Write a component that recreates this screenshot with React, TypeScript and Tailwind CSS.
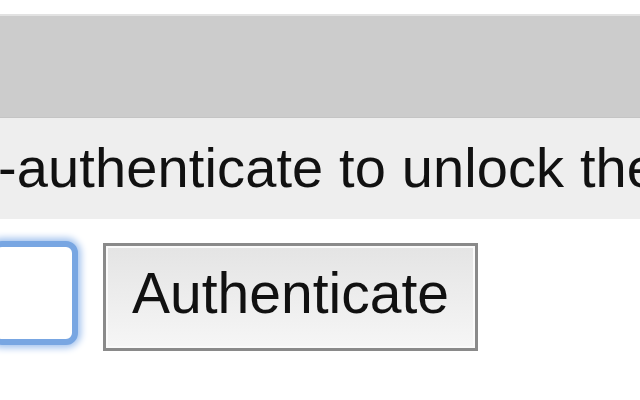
export default function App() {
  return (
    <div className="w-[640px] h-[400px] overflow-hidden bg-white font-['Liberation_Sans',Arial,sans-serif] text-[#111]">
      {/* page header strip */}
      <div className="h-[16px] bg-white border-b-2 border-[#e2e2e2]" />
      <div className="h-[102px] bg-[#cccccc] border-b border-[#c4c4c4]" />

      {/* message bar */}
      <div className="h-[101px] bg-[#eeeeee] flex items-center overflow-hidden">
        <p className="whitespace-nowrap text-[56px] tracking-[0.12px] leading-none -ml-[2px] pb-[1px]">
          -authenticate to unlock the
        </p>
      </div>

      {/* form row */}
      <div className="flex items-start gap-[25px] pt-[22px]">
        <div className="w-[88px] h-[104px] -ml-[10px] rounded-[12px] border-[6px] border-[#78a6e2] bg-white shadow-[0_0_7px_3px_#a3c3ee]" />
        <button className="h-[108px] w-[375px] mt-[2px] border-[3px] border-[#8a8a8a] bg-gradient-to-b from-[#e4e4e4] to-[#f6f6f6] shadow-[inset_0_0_0_2px_#fafafa] text-[57px] leading-none text-[#111] pb-[8px]">
          Authenticate
        </button>
      </div>
    </div>
  );
}
